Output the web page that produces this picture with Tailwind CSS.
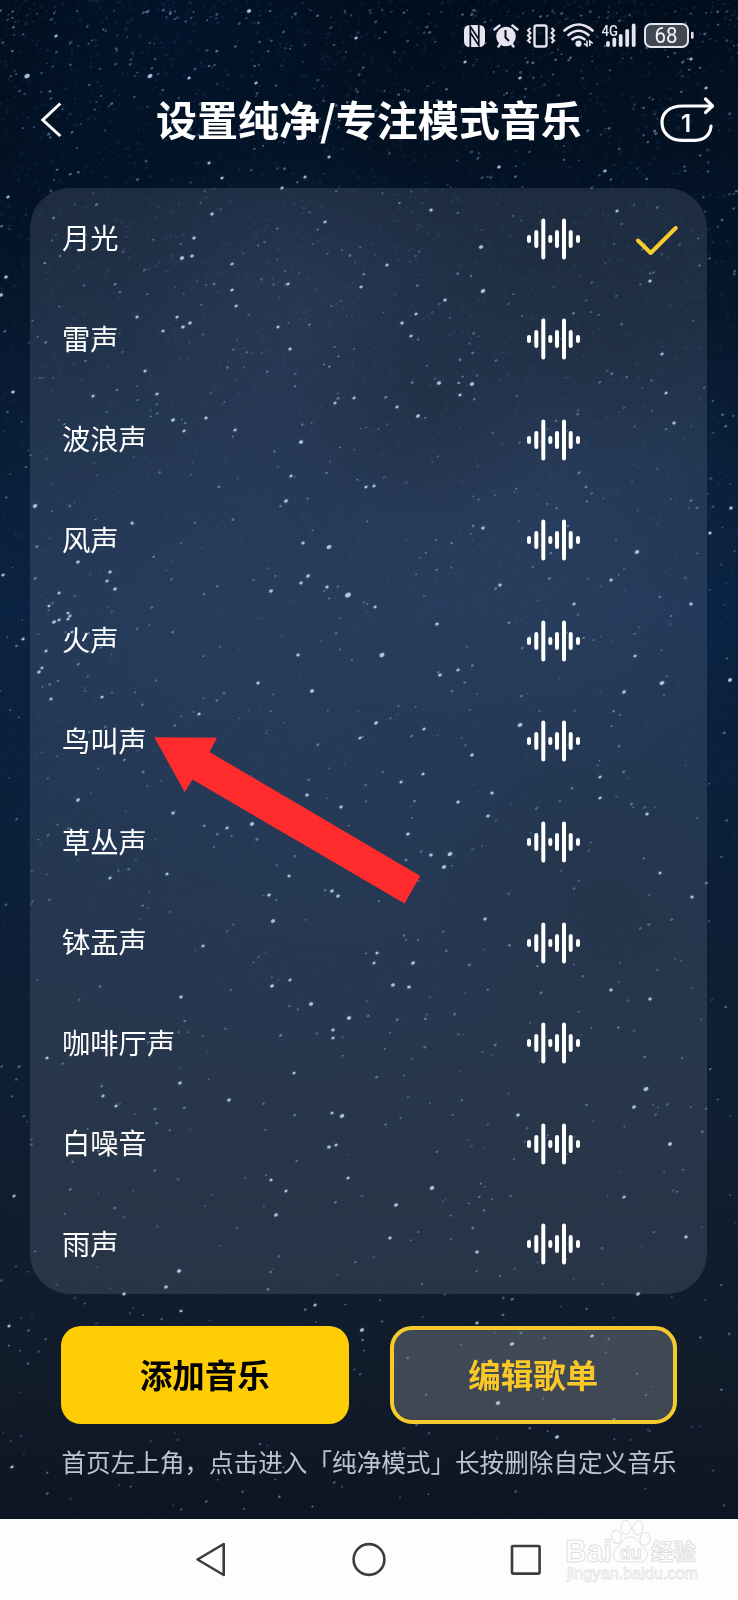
<!DOCTYPE html>
<html lang="zh-CN">

<head>
  <meta charset="UTF-8" />
  <meta name="viewport" content="width=device-width, initial-scale=1.0" />
  <title>设置纯净/专注模式音乐</title>
  <script src="https://cdn.jsdelivr.net/npm/@tailwindcss/browser@4"></script>
</head>

<body class="bg-[#0b1a2c] text-white font-['Noto_Sans_CJK_SC',sans-serif]">

  <div class="relative w-[738px] h-[1600px] overflow-hidden flex flex-col">

    <canvas id="sky" width="738" height="1600" class="absolute inset-0"></canvas>

    <!-- Status bar -->
    <div class="relative h-[70px] pl-[464px] pt-[22px] shrink-0">
      <svg width="232" height="28" viewBox="464 22 232 28" fill="none" stroke="#e6e4ee" stroke-width="2">
        <!-- nfc -->
        <path d="M470 25 H479 Q485 25 485 31 V41 Q485 47 479 47 H470 Q464 47 464 41 V31 Q464 25 470 25 Z" fill="#e6e4ee" stroke="none" />
        <path d="M470.3 47 V26.5 L479 39.5 M478.8 25 V45.5 L470.3 32.5" stroke="#06101f" stroke-width="1.7" />
        <!-- alarm -->
        <circle cx="506" cy="36.5" r="9.8" fill="#e6e4ee" stroke="none" />
        <path d="M494.5 29.5 L499.5 25.5 M517.5 29.5 L512.5 25.5 M498.5 46.5 L501 43 M513.5 46.5 L511 43" stroke-width="2.4" stroke-linecap="round" />
        <path d="M505.5 30 V37.5 L509 41" stroke="#050f1e" stroke-width="2" />
        <!-- vibrate -->
        <rect x="534.5" y="25.5" width="12" height="21" rx="2" stroke-width="2.4" />
        <path d="M530.5 28 L528 30.5 L530.5 33 L528 35.5 L530.5 38 L528 40.5 L530.5 43 M551.5 28 L554 30.5 L551.5 33 L554 35.5 L551.5 38 L554 40.5 L551.5 43" />
        <!-- wifi -->
        <path d="M564.5 30.5 Q578.5 18.5 592.5 30.5 M568.5 35 Q578.5 26.5 588.5 35 M572.5 39.3 Q578.5 34.5 584.5 39.3" stroke-width="2.6" stroke-linecap="round" />
        <circle cx="578.5" cy="43.7" r="3.1" fill="#e6e4ee" stroke="none" />
        <path d="M587 40.5 V46 L584 43.7 M589.8 46 V41 L592.8 43.5" stroke-width="1.6" />
        <!-- signal -->
        <path d="M608 43 V45 M614.3 39.5 V45 M620.7 36 V45 M627.2 31 V45 M633.7 25.5 V45" stroke-width="3.8" stroke-linecap="round" />
        <text x="601.5" y="35.5" font-family="Roboto" font-size="15" font-weight="500" fill="#e6e4ee" stroke="none" textLength="16.5" lengthAdjust="spacingAndGlyphs">4G</text>
        <!-- battery -->
        <rect x="645" y="24" width="43" height="23" rx="6" fill="#414852" />
        <path d="M692.3 33 V37.5" stroke-width="2.6" stroke-linecap="round" />
        <text x="654.5" y="43.2" font-family="Roboto" font-size="22.5" fill="#f2f1f6" stroke="none" textLength="23" lengthAdjust="spacingAndGlyphs">68</text>
      </svg>
    </div>

    <!-- Header -->
    <header class="relative flex items-center h-[100px] pl-[38px] pr-[22px] shrink-0">
      <svg width="60" height="40" viewBox="38 100 60 40" fill="none" stroke="#fff" stroke-width="3">
        <path d="M60.3 103.5 L42.8 120 L60.3 136" />
      </svg>
      <h1 class="w-[426px] ml-[58px] pb-1 text-[41px] leading-[60px] font-bold whitespace-nowrap">设置纯净/专注模式音乐</h1>
      <svg class="ml-auto" width="56" height="48" viewBox="660 96 56 48" fill="none" stroke="#fff" stroke-width="3.2" stroke-linecap="round" stroke-linejoin="round">
        <path d="M712 106 H683 C667 106 662 115 662 122.5 C662 131 668 140.4 682 140.4 H695 C705 140.4 710.5 134 711 126" />
        <path d="M705.5 99 L712.5 106 L705.5 112.5" />
        <text x="681" y="132" font-family="Inter" font-size="24" font-weight="600" fill="#fff" stroke="none">1</text>
      </svg>
    </header>

    <!-- Music list -->
    <ul id="musicList" class="relative w-[677px] h-[1106px] mt-[18px] ml-[30px] rounded-[40px] bg-[#d4dcfa]/13 grid grid-rows-11 shrink-0"></ul>

    <!-- Actions -->
    <div class="relative grid grid-cols-2 gap-[41px] mt-8 pl-[61px] pr-[61px] shrink-0">
      <button class="h-[98px] pb-0.5 rounded-[20px] bg-[#ffcd05] text-black text-[32.5px] font-bold">添加音乐</button>
      <button class="h-[98px] pb-0.5 rounded-[22px] border-4 border-[#f5cb2c] bg-white/20 text-[#f9c826] text-[32.5px] font-bold">编辑歌单</button>
    </div>
    <p class="relative mt-[18px] pl-[61.5px] text-[24.6px] leading-[38px] whitespace-nowrap text-[#c0c3cf] shrink-0">首页左上角，点击进入「纯净模式」长按删除自定义音乐</p>

    <!-- System navigation -->
    <nav class="relative mt-auto h-[81px] bg-[#fdfdfd] shrink-0">
      <svg width="738" height="81" viewBox="0 1519 738 81" fill="none" stroke="#3c3c3e" stroke-width="2.6" stroke-linejoin="round">
        <path d="M197.5 1559.5 L223.7 1544 V1575 Z" />
        <circle cx="369" cy="1559.5" r="15.4" />
        <rect x="512" y="1546" width="27.6" height="27.6" rx="1" />
        <g stroke="#dfdfe3" stroke-width="1" fill="#fdfdfd">
          <text x="565" y="1562" font-family="Liberation Sans" font-size="31" font-weight="700" textLength="47" lengthAdjust="spacingAndGlyphs">Bai</text>
          <ellipse cx="616.5" cy="1537" rx="5" ry="6.5" transform="rotate(-14 616.5 1537)" />
          <ellipse cx="626" cy="1527.5" rx="5" ry="7" />
          <ellipse cx="638" cy="1528" rx="5" ry="7" transform="rotate(10 638 1528)" />
          <ellipse cx="645" cy="1539" rx="5" ry="6.5" transform="rotate(14 645 1539)" />
          <path d="M630.5 1537 C638 1537 639 1544 645 1549 C650 1554 647 1562 640 1562 H621 C613 1562 611 1554 616 1549 C622 1544 623 1537 630.5 1537 Z" />
          <text x="619.5" y="1559" font-family="Liberation Sans" font-size="19" font-weight="700" textLength="22" lengthAdjust="spacingAndGlyphs">du</text>
          <text x="651" y="1560" font-family="Noto Sans CJK SC" font-size="22.5" font-weight="700">经验</text>
          <text x="567" y="1578.5" font-family="Liberation Sans" font-size="17" stroke="#e4e4e8" stroke-width="0.8" textLength="131" lengthAdjust="spacingAndGlyphs">jingyan.baidu.com</text>
        </g>
      </svg>
    </nav>

    <!-- Pointer over the list -->
    <svg class="absolute left-[150px] top-[730px]" width="280" height="180" viewBox="150 730 280 180">
      <path d="M154.3 737.3 L217 737.8 L209.5 752 L420.3 876 L404.5 903.5 L192.5 779.5 L184.7 792 Z" fill="#ff2b2d" />
    </svg>
  </div>

  <script>
    const tracks = ['月光', '雷声', '波浪声', '风声', '火声', '鸟叫声', '草丛声', '钵盂声', '咖啡厅声', '白噪音', '雨声'];
    const selected = 0;

    const wave = `<svg width="54" height="42" viewBox="0 0 54 42" stroke="#fff" stroke-width="4" stroke-linecap="round">
      <path d="M2 19 V23 M9.3 14 V28 M16.3 2.5 V39.5 M23.3 19 V23 M30 14 V28 M37 2.5 V39.5 M43.7 14 V28 M51 19 V23" />
    </svg>`;
    const check = `<svg width="42" height="30" viewBox="0 0 42 30" fill="none" stroke="#f6cd2d" stroke-width="4" stroke-linecap="round" stroke-linejoin="round">
      <path d="M2 14.5 L14.7 27 L39.7 2" />
    </svg>`;

    document.getElementById('musicList').innerHTML = tracks.map((name, i) => `
      <li class="flex items-center pl-8 pr-[29px]">
        <span class="flex-1 pb-0.5 text-[28.3px] leading-10">${name}</span>
        <span class="w-[54px] mr-[55px] pt-px">${wave}</span>
        <span class="w-[42px] pt-1.5">${i === selected ? check : ''}</span>
      </li>`).join('');

    // Bright stars: x, y, size
    const stars = [
      [27,76,2.6],[150,76,2.3],[249,11,2],[189,78,1.5],[56,36,1.5],[356,38,1.5],[256,83,1.5],[329,157,1.5],[209,163,1.5],[222,178,1.5],
      [305,177,1.5],[282,188,1.5],[212,214,1.6],[431,210,1.6],[481,247,2],[232,264,1.5],[182,258,2],[192,256,1.6],[194,238,1.6],[387,265,1.5],
      [483,291,2.2],[361,287,1.5],[288,284,1.5],[232,290,1.5],[236,306,1.5],[445,300,1.6],[416,314,1.5],[402,323,1.6],[411,336,1.5],[290,349,1.6],
      [278,327,1.5],[190,323,1.7],[183,327,1.7],[177,317,1.5],[137,317,1.5],[163,331,1.5],[145,371,1.5],[93,396,1.5],[439,383,2],[472,384,2],
      [460,395,1.5],[354,398,1.5],[335,403,1.5],[397,407,1.5],[418,416,1.8],[157,394,1.5],[173,420,1.8],[206,418,1.6],[184,431,1.5],[235,430,1.5],
      [301,442,2],[78,433,1.5],[291,476,1.5],[366,487,1.5],[374,486,1.5],[286,501,1.8],[35,506,2.1],[132,523,1.5],[329,547,2.3],[303,543,1.6],
      [483,528,1.6],[637,552,2.1],[348,595,2.8],[78,562,1.7],[308,576,1.8],[301,583,1.6],[327,587,1.6],[271,591,1.8],[500,585,1.6],[611,580,1.6],
      [437,624,1.6],[375,607,1.5],[574,604,1.5],[674,423,1.6],[666,393,1.5],[662,354,1.5],[650,281,1.6],[617,211,1.5],[520,78,1.5],[499,167,1.6],
      [605,171,1.5],[465,62,1.5],[691,59,1.5],[706,88,1.5],[325,222,1.5],[6,277,1.7],[1,295,1.8],[8,197,1.5],[13,392,1.6],[710,533,1.6],
      [731,508,1.6],[691,604,1.6],[382,655,2.4],[298,655,1.6],[440,675,1.7],[458,670,1.5],[312,691,2],[624,692,1.8],[662,683,2.3],[635,656,1.5],
      [730,680,2],[258,683,1.6],[51,699,1.5],[102,697,1.5],[199,714,1.5],[376,723,1.8],[520,725,2.2],[424,729,1.5],[360,738,1.5],[472,755,1.7],
      [423,774,1.5],[401,782,1.5],[600,777,1.5],[492,793,1.6],[78,800,1.8],[173,813,1.6],[307,795,1.6],[341,807,1.6],[252,824,2],[227,828,1.5],
      [600,798,1.5],[458,802,1.6],[488,816,1.6],[647,814,1.6],[408,834,1.7],[450,854,2.3],[444,867,2],[431,855,1.7],[660,873,1.5],[692,897,1.6],
      [289,876,1.5],[167,874,1.5],[110,878,1.5],[269,895,1.6],[332,891,1.7],[338,896,1.7],[273,921,2],[485,919,1.6],[203,946,1.5],[377,953,1.5],
      [374,963,1.5],[413,963,1.8],[290,980,1.5],[272,986,1.9],[393,985,1.8],[409,987,1.7],[181,997,1.6],[311,1004,2],[349,1018,2],[611,990,1.6],
      [650,999,1.6],[333,1030,1.6],[333,1038,1.5],[294,1073,1.5],[180,1083,1.7],[229,1100,1.7],[646,1089,2.3],[634,1107,1.8],[342,1116,2.1],[332,1113,1.5],
      [518,1115,1.7],[670,1144,2],[329,1147,1.7],[336,1145,1.5],[432,1188,2.1],[396,1205,1.9],[276,1215,1.8],[286,1191,1.5],[348,1178,1.5],[271,1180,1.5],
      [390,1238,1.6],[477,1252,1.6],[624,1197,1.5],[686,1237,1.6],[103,1096,1.5],[116,1106,1.5],[47,1058,1.5],[14,1196,1.5],[179,1271,2],[166,1287,1.7],
      [124,1294,1.6],[362,1330,2],[315,1305,1.5],[181,1311,1.4],[9,1326,1.5],[12,1467,1.5],[638,1294,1.8],[512,1344,1.8],[498,1403,2],[477,1323,1.5],
      [557,1437,1.8],[592,1336,1.5],[54,622,1.8],[59,620,1.5],[68,619,1.5],[70,616,1.5],[72,632,1.4],[110,572,1.6],[107,581,1.5],[115,589,1.7],
      [59,593,1.5],[49,606,1.4],[68,613,1.4],[46,651,1.5],[39,672,1.7],[42,668,1.4],[23,639,1.5],[3,575,1.5]
    ];

    const ctx = document.getElementById('sky').getContext('2d');
    const base = ctx.createLinearGradient(0, 0, 0, 1600);
    base.addColorStop(0, '#020d1c');
    base.addColorStop(0.11, '#031224');
    base.addColorStop(0.25, '#071a31');
    base.addColorStop(0.38, '#0b2240');
    base.addColorStop(0.52, '#0b203a');
    base.addColorStop(0.7, '#0f1e31');
    base.addColorStop(0.85, '#111c2b');
    base.addColorStop(0.95, '#0d1522');
    ctx.fillStyle = base;
    ctx.fillRect(0, 0, 738, 1600);

    let seed = 7;
    function rand() {
      seed = (seed * 16807) % 2147483647;
      return seed / 2147483647;
    }

    function glow(x, y, r, color) {
      const g = ctx.createRadialGradient(x, y, 0, x, y, r);
      g.addColorStop(0, `rgba(${color})`);
      g.addColorStop(1, `rgba(${color.replace(/[^,]+$/, '0')})`);
      ctx.fillStyle = g;
      ctx.fillRect(x - r, y - r, r * 2, r * 2);
    }

    // soft clouds
    glow(180, 30, 220, '2,24,52,0.6');
    glow(250, 500, 330, '28,52,90,0.25');
    glow(560, 520, 260, '28,54,92,0.3');
    glow(300, 300, 180, '26,44,80,0.35');
    glow(430, 400, 130, '2,10,20,0.3');
    glow(600, 330, 130, '4,12,20,0.25');
    glow(330, 800, 330, '16,42,74,0.25');
    glow(0, 620, 180, '4,30,66,0.2');
    glow(738, 620, 180, '4,30,66,0.3');
    glow(600, 900, 170, '8,16,24,0.2');

    function star(x, y, r, color) {
      ctx.fillStyle = color;
      ctx.beginPath();
      ctx.ellipse(x, y, r, r * 0.72, -0.5, 0, Math.PI * 2);
      ctx.fill();
    }

    // faint dust, thinner towards the bottom
    for (let i = 0; i < 12000; i++) {
      const y = Math.pow(rand(), 1.25) * 1520;
      star(rand() * 738, y, 0.7 + rand() * 1.3, `rgba(60,105,155,${(0.05 + rand() * 0.16) * (1 - y / 1700)})`);
    }
    for (let i = 0; i < 1300; i++) {
      const y = 10 + Math.pow(rand(), 1.6) * 1500;
      star(rand() * 738, y, 1 + rand() * 0.8, `rgba(125,165,205,${0.22 + rand() * 0.4})`);
    }
    ctx.shadowColor = 'rgba(120,170,220,0.6)';
    ctx.shadowBlur = 2;
    stars.forEach(([x, y, r]) => star(x, y, r + 0.2, 'rgba(190,210,232,0.85)'));
  </script>

</body>

</html>
